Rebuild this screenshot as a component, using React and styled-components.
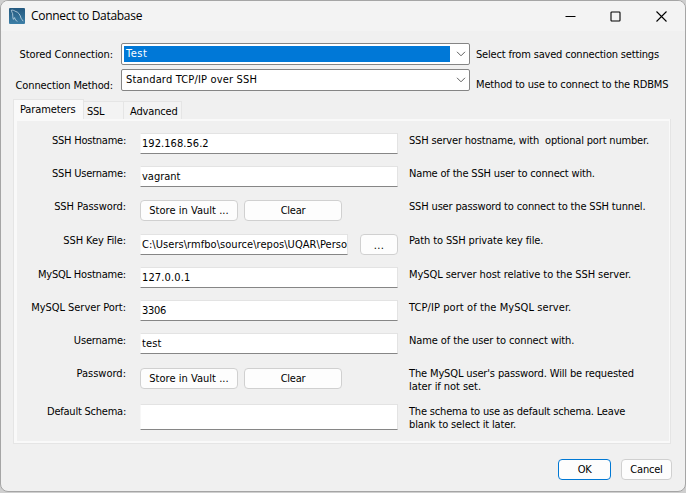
import React from 'react';
import styled, { createGlobalStyle } from 'styled-components';

const Global = createGlobalStyle`
  * { box-sizing: border-box; }
  html, body { margin: 0; height: 100%; background: #cfcfcf; overflow: hidden; }
  body { font: 11px/13px "DejaVu Sans Condensed", "DejaVu Sans", sans-serif; color: #000; }
`;

const Dialog = styled.main`
  width: 686px;
  height: 492px;
  display: flex;
  flex-direction: column;
  background: #f0f0f0;
  border: 1px solid #a5a5a5;
  border-radius: 8px;
  overflow: hidden;
`;

const TitleBar = styled.header`
  height: 30px;
  flex: none;
  display: flex;
  align-items: center;
  padding: 0 1px 0 8px;
  background: #f3f3f3;
`;

const Title = styled.h1`
  flex: 1;
  margin: 0 0 0 6px;
  font: 400 12px/16px "Open Sans", sans-serif;
  letter-spacing: -0.3px;
`;

const CaptionButtons = styled.div`
  display: flex;
`;

const CaptionButton = styled.button`
  width: ${(p) => p.$w || 45}px;
  height: 29px;
  padding: 0;
  border: 0;
  background: none;
  display: grid;
  place-items: center;
`;

const Text = styled.span`
  letter-spacing: ${(p) => p.$track || 0}px;
  white-space: pre;
`;

const Connection = styled.section`
  height: 68px;
  flex: none;
  display: grid;
  grid-template-columns: 112px 357px 1fr;
  grid-template-rows: 22px 22px;
  row-gap: 4px;
  padding-top: 12px;
`;

const ConnectionLabel = styled.label`
  padding-top: ${(p) => p.$top}px;
  text-align: right;
`;

const ConnectionHint = styled.div`
  padding: ${(p) => p.$top}px 0 0 6px;
`;

const Select = styled.div`
  margin-left: 8px;
  width: 349px;
  height: 22px;
  display: flex;
  align-items: center;
  padding: 0 3px 0 2px;
  border: 1px solid #858585;
  border-radius: 2px;
  background: #fff;
`;

const SelectValue = styled.div`
  flex: 1;
  height: 16px;
  padding: 1px 0 0 2px;
  line-height: 14px;
  color: ${(p) => (p.$selected ? '#fff' : '#000')};
  background: ${(p) => (p.$selected ? '#0078d7' : 'transparent')};
  margin-right: 6px;
`;

const Tabs = styled.nav`
  height: 20px;
  flex: none;
  display: flex;
  align-items: flex-end;
  padding-left: 12px;
`;

const Tab = styled.button`
  width: ${(p) => p.$w}px;
  height: ${(p) => (p.$active ? 20 : 18)}px;
  padding: 3px 0 0 ${(p) => p.$pad}px;
  display: flex;
  align-items: flex-start;
  border: 1px solid #e5e5e5;
  border-bottom: 0;
  border-left-width: ${(p) => (p.$active ? 1 : 0)}px;
  background: ${(p) => (p.$active ? '#f9f9f9' : '#f3f3f3')};
  font: inherit;
  color: inherit;
`;

const Page = styled.section`
  width: 658px;
  height: 325px;
  flex: none;
  margin-left: 12px;
  border: 1px solid #e5e5e5;
  border-top: 0;
  background: #f9f9f9;
  padding: 2px 1px 2px 3px;
`;

const Form = styled.div`
  height: 320px;
  padding-top: 12px;
  background: #f0f0f0;
`;

const Row = styled.div`
  height: ${(p) => p.$h}px;
  display: grid;
  grid-template-columns: 109px 258px 1fr;
  column-gap: 14px;
  align-items: start;
`;

const RowLabel = styled.label`
  margin-top: ${(p) => p.$top}px;
  text-align: right;
`;

const Controls = styled.div`
  display: flex;
  gap: ${(p) => p.$gap || 0}px;
`;

const Hint = styled.p`
  margin: ${(p) => p.$top}px 0 0 -3px;
`;

const HintLine = styled(Text)`
  display: block;
`;

const Field = styled.div`
  width: ${(p) => p.$w || 258}px;
  height: ${(p) => p.$h || 21}px;
  flex: none;
  padding: 3px 0 0 1px;
  overflow: hidden;
  border: 1px solid #e3e3e3;
  border-left-color: #f7f7f7;
  border-bottom-color: #868686;
  background: #fff;
`;

const Button = styled.button`
  width: ${(p) => p.$w}px;
  height: 21px;
  flex: none;
  padding: ${(p) => p.$drop || 0}px 0 0;
  border: 1px solid ${(p) => (p.$primary ? '#0078d4' : '#d0d0d0')};
  border-radius: 4px;
  background: #fdfdfd;
  font: inherit;
  color: #000;
`;

const Footer = styled.footer`
  display: flex;
  justify-content: flex-end;
  gap: 10px;
  padding: 15px 13px 0 0;
`;

const Logo = () => (
  <svg width="16" height="16" viewBox="0 0 16 16">
    <defs>
      <linearGradient id="sea" x1="0" y1="0" x2="0" y2="1">
        <stop offset="0" stopColor="#24597f" />
        <stop offset="1" stopColor="#3c7ea6" />
      </linearGradient>
    </defs>
    <rect width="16" height="16" rx="1" fill="url(#sea)" />
    <path
      d="M2.3 2.2C4 1.9 5.2 2.6 6.1 3.2C9.8 4.1 11.4 7.3 12 10.2C12.5 11.3 13.6 12 14.2 13.2M2.3 2.2C2.6 4 3.3 4.6 3.6 5.6C3.8 7.8 3.6 9.6 4.4 11.4L5.6 9.6C6 11.6 7 12.8 8.4 13.4"
      fill="none"
      stroke="#b8cfde"
      strokeWidth="0.9"
    />
  </svg>
);

const Chevron = () => (
  <svg width="10" height="6" viewBox="0 0 10 6">
    <path d="M1 0.8L5 4.8L9 0.8" fill="none" stroke="#606060" />
  </svg>
);

const ROWS = [
  { h: 33, top: 1, label: 'SSH Hostname:', lt: -0.24, value: '192.168.56.2', vt: 0.05,
    hints: [['SSH server hostname, with  optional port number.', -0.17]] },
  { h: 34, top: 1, label: 'SSH Username:', lt: -0.23, value: 'vagrant', vt: 0,
    hints: [['Name of the SSH user to connect with.', -0.17]] },
  { h: 34, top: 0, label: 'SSH Password:', lt: -0.06, kind: 'vault',
    hints: [['SSH user password to connect to the SSH tunnel.', -0.16]] },
  { h: 33, top: 0, label: 'SSH Key File:', lt: -0.1, kind: 'file',
    value: 'C:\\Users\\rmfbo\\source\\repos\\UQAR\\Perso', vt: 0.05,
    hints: [['Path to SSH private key file.', -0.12]] },
  { h: 33, top: 1, label: 'MySQL Hostname:', lt: -0.2, value: '127.0.0.1', vt: 0.14,
    hints: [['MySQL server host relative to the SSH server.', -0.08]] },
  { h: 33, top: 1, label: 'MySQL Server Port:', lt: -0.05, value: '3306', vt: -0.3,
    hints: [['TCP/IP port of the MySQL server.', 0.08]] },
  { h: 35, top: 1, label: 'Username:', lt: -0.18, value: 'test', vt: 0.15,
    hints: [['Name of the user to connect with.', -0.11]] },
  { h: 36, top: -1, label: 'Password:', lt: 0, kind: 'vault',
    hints: [["The MySQL user's password. Will be requested", -0.14], ['later if not set.', -0.06]] },
  { h: 26, top: 1, label: 'Default Schema:', lt: -0.23, value: '', fieldHeight: 26,
    hints: [['The schema to use as default schema. Leave', -0.18], ['blank to select it later.', -0.14]] },
];

function FormRow({ row }) {
  return (
    <Row $h={row.h}>
      <RowLabel $top={row.top}>
        <Text $track={row.lt}>{row.label}</Text>
      </RowLabel>
      {row.kind === 'vault' ? (
        <Controls $gap={6}>
          <Button $w={98}><Text $track={0.03}>Store in Vault ...</Text></Button>
          <Button $w={98}><Text $track={-0.25}>Clear</Text></Button>
        </Controls>
      ) : (
        <Controls $gap={12}>
          <Field $w={row.kind === 'file' ? 208 : 258} $h={row.fieldHeight}>
            <Text $track={row.vt}>{row.value}</Text>
          </Field>
          {row.kind === 'file' && <Button $w={38} $drop={1}><Text $track={0.4}>...</Text></Button>}
        </Controls>
      )}
      <Hint $top={row.top}>
        {row.hints.map(([text, track]) => <HintLine key={text} $track={track}>{text}</HintLine>)}
      </Hint>
    </Row>
  );
}

export default function App() {
  return (
    <>
      <Global />
      <Dialog>
        <TitleBar>
          <Logo />
          <Title>Connect to Database</Title>
          <CaptionButtons>
            <CaptionButton aria-label="Minimize">
              <svg width="11" height="11"><path d="M0.5 5.5H10.5" stroke="#000" /></svg>
            </CaptionButton>
            <CaptionButton aria-label="Maximize">
              <svg width="11" height="11"><rect x="1" y="1" width="9" height="9" rx="0.8" fill="none" stroke="#000" strokeWidth="1.1" /></svg>
            </CaptionButton>
            <CaptionButton aria-label="Close" $w={46}>
              <svg width="11" height="11"><path d="M0.5 0.5L10.5 10.5M10.5 0.5L0.5 10.5" stroke="#000" strokeWidth="1.1" /></svg>
            </CaptionButton>
          </CaptionButtons>
        </TitleBar>
        <Connection>
          <ConnectionLabel $top={5}><Text $track={-0.08}>Stored Connection:</Text></ConnectionLabel>
          <Select>
            <SelectValue $selected><Text $track={0.5}>Test</Text></SelectValue>
            <Chevron />
          </Select>
          <ConnectionHint $top={5}><Text $track={-0.18}>Select from saved connection settings</Text></ConnectionHint>
          <ConnectionLabel $top={10}><Text $track={-0.12}>Connection Method:</Text></ConnectionLabel>
          <Select>
            <SelectValue><Text $track={0.17}>Standard TCP/IP over SSH</Text></SelectValue>
            <Chevron />
          </Select>
          <ConnectionHint $top={9}><Text $track={-0.16}>Method to use to connect to the RDBMS</Text></ConnectionHint>
        </Connection>
        <Tabs>
          <Tab $active $w={71} $pad={6}><Text $track={-0.1}>Parameters</Text></Tab>
          <Tab $w={40} $pad={3}><Text $track={-0.3}>SSL</Text></Tab>
          <Tab $w={58} $pad={6}><Text $track={-0.15}>Advanced</Text></Tab>
        </Tabs>
        <Page>
          <Form>
            {ROWS.map((row) => <FormRow key={row.label} row={row} />)}
          </Form>
        </Page>
        <Footer>
          <Button $w={53} $primary><Text $track={-0.4}>OK</Text></Button>
          <Button $w={51}><Text $track={-0.2}>Cancel</Text></Button>
        </Footer>
      </Dialog>
    </>
  );
}
